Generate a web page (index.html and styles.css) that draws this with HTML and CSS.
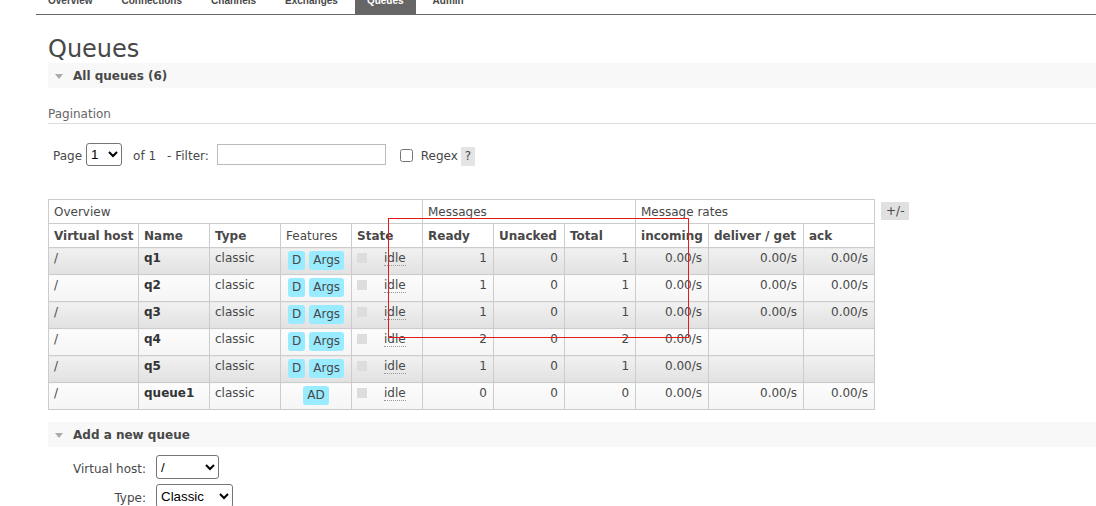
FILE: index.html
```
<!DOCTYPE html>
<html lang="en">
<head>
<meta charset="utf-8">
<title>RabbitMQ Management: Queues</title>
<link rel="stylesheet" href="styles.css">
</head>
<body>
<ul class="menu">
  <li class="tab">Overview</li>
  <li class="tab">Connections</li>
  <li class="tab">Channels</li>
  <li class="tab">Exchanges</li>
  <li class="tab tab-active">Queues</li>
  <li class="tab">Admin</li>
</ul>
<div class="main">
  <h1 class="title">Queues</h1>
  <div class="section-head"><span class="tri"></span><span>All queues (6)</span></div>
  <h3 class="pag-title">Pagination</h3>
  <div class="pager">
    <span class="txt">Page</span>
    <select class="sel sel-page"><option>1</option></select>
    <span class="txt of">of 1</span>
    <span class="txt filter">- Filter:</span>
    <input class="filter-input" type="text">
    <input class="chk" type="checkbox">
    <span class="txt regex">Regex</span>
    <span class="help">?</span>
  </div>
  <div class="table-wrap">
    <table class="list">
      <colgroup>
        <col class="w90"><col class="w71"><col class="w71"><col class="w71"><col class="w71"><col class="w71"><col class="w71"><col class="w71"><col class="w73"><col class="w95"><col class="w71">
      </colgroup>
      <thead>
        <tr class="group">
          <th colspan="5">Overview</th>
          <th colspan="3">Messages</th>
          <th colspan="3">Message rates</th>
        </tr>
        <tr class="cols">
          <th>Virtual host</th><th>Name</th><th>Type</th><th class="plain">Features</th><th>State</th><th>Ready</th><th>Unacked</th><th>Total</th><th>incoming</th><th>deliver / get</th><th>ack</th>
        </tr>
      </thead>
      <tbody>
        <tr class="alt1">
          <td>/</td><td class="name">q1</td><td>classic</td>
          <td class="feat"><div class="badges"><span class="badge">D</span><span class="badge">Args</span></div></td>
          <td><span class="sq"></span><span class="idle">idle</span></td>
          <td class="r">1</td><td class="r">0</td><td class="r">1</td><td class="r">0.00/s</td><td class="r">0.00/s</td><td class="r">0.00/s</td>
        </tr>
        <tr class="alt2">
          <td>/</td><td class="name">q2</td><td>classic</td>
          <td class="feat"><div class="badges"><span class="badge">D</span><span class="badge">Args</span></div></td>
          <td><span class="sq"></span><span class="idle">idle</span></td>
          <td class="r">1</td><td class="r">0</td><td class="r">1</td><td class="r">0.00/s</td><td class="r">0.00/s</td><td class="r">0.00/s</td>
        </tr>
        <tr class="alt1">
          <td>/</td><td class="name">q3</td><td>classic</td>
          <td class="feat"><div class="badges"><span class="badge">D</span><span class="badge">Args</span></div></td>
          <td><span class="sq"></span><span class="idle">idle</span></td>
          <td class="r">1</td><td class="r">0</td><td class="r">1</td><td class="r">0.00/s</td><td class="r">0.00/s</td><td class="r">0.00/s</td>
        </tr>
        <tr class="alt2">
          <td>/</td><td class="name">q4</td><td>classic</td>
          <td class="feat"><div class="badges"><span class="badge">D</span><span class="badge">Args</span></div></td>
          <td><span class="sq"></span><span class="idle">idle</span></td>
          <td class="r">2</td><td class="r">0</td><td class="r">2</td><td class="r">0.00/s</td><td class="r"></td><td class="r"></td>
        </tr>
        <tr class="alt1">
          <td>/</td><td class="name">q5</td><td>classic</td>
          <td class="feat"><div class="badges"><span class="badge">D</span><span class="badge">Args</span></div></td>
          <td><span class="sq"></span><span class="idle">idle</span></td>
          <td class="r">1</td><td class="r">0</td><td class="r">1</td><td class="r">0.00/s</td><td class="r"></td><td class="r"></td>
        </tr>
        <tr class="alt2">
          <td>/</td><td class="name">queue1</td><td>classic</td>
          <td class="feat"><div class="badges"><span class="badge">AD</span></div></td>
          <td><span class="sq"></span><span class="idle">idle</span></td>
          <td class="r">0</td><td class="r">0</td><td class="r">0</td><td class="r">0.00/s</td><td class="r">0.00/s</td><td class="r">0.00/s</td>
        </tr>
      </tbody>
    </table>
    <span class="toggle">+/-</span>
  </div>
  <div class="section-head"><span class="tri"></span><span>Add a new queue</span></div>
  <div class="form">
    <label class="lbl">Virtual host:</label>
    <select class="sel sel-vh"><option>/</option></select>
    <label class="lbl">Type:</label>
    <select class="sel sel-type"><option>Classic</option></select>
  </div>
</div>
<div class="annot"></div>
</body>
</html>
```
FILE: styles.css
```
html, body {
  overflow: hidden;
}
body {
  margin: 0;
  font-family: "DejaVu Sans", Verdana, sans-serif;
  font-size: 12px;
  line-height: 14px;
  color: #484848;
  background: #fff;
}
.menu {
  display: flex;
  list-style: none;
  margin: -20px 0 0 36px;
  padding: 0;
  border-bottom: 1px solid #666;
}
.tab {
  height: 27px;
  line-height: 28px;
  padding: 7px 12px 0;
  margin-right: 5px;
  font-family: "Liberation Sans", Arial, sans-serif;
  font-weight: bold;
  font-size: 10px;
  color: #484848;
  overflow: hidden;
}
.tab-active {
  background: #666;
  color: #fff;
}
.main {
  padding-left: 48px;
}
.title {
  margin: 20px 0 0;
  font-size: 24px;
  line-height: 28px;
  font-weight: normal;
  color: #484848;
}
.section-head {
  display: flex;
  align-items: center;
  height: 25px;
  background: #f8f8f8;
  font-weight: bold;
  color: #484848;
}
.tri {
  width: 0;
  height: 0;
  border-left: 4.5px solid transparent;
  border-right: 4.5px solid transparent;
  border-top: 5px solid #aaa;
  margin: 1px 10px 0 7px;
}
.pag-title {
  margin: 19px 0 0;
  padding-bottom: 2px;
  border-bottom: 1px solid #ddd;
  font-size: 12px;
  line-height: 14px;
  font-weight: normal;
  color: #666;
}
.pager {
  display: flex;
  align-items: center;
  height: 24px;
  margin-top: 18px;
  padding-left: 5px;
}
.txt {
  margin-top: 3px;
}
.sel {
  box-sizing: border-box;
  font-family: "Liberation Sans", Arial, sans-serif;
  font-size: 13.33px;
  color: #000;
  background: #fff;
  border: 1px solid #767676;
  border-radius: 3px;
  margin: 0;
}
.sel-page {
  width: 36px;
  height: 23px;
  margin-left: 4px;
}
.of {
  margin-left: 11px;
}
.filter {
  margin-left: 11px;
}
.filter-input {
  box-sizing: border-box;
  width: 169px;
  height: 21px;
  margin: 0 0 0 8px;
  border: 1px solid #bbb;
  padding: 0 2px;
}
.chk {
  width: 13px;
  height: 13px;
  margin: 2px 0 0 14px;
}
.regex {
  margin-left: 8px;
}
.help {
  margin: 5px 0 0 3px;
  padding: 0 4px;
  height: 19px;
  line-height: 19px;
  background: #e4e4e4;
}
.table-wrap {
  display: flex;
  align-items: flex-start;
  margin-top: 33px;
}
.list {
  table-layout: fixed;
  width: 827px;
  border-collapse: collapse;
}
.w90 { width: 90px; }
.w71 { width: 71px; }
.w73 { width: 73px; }
.w95 { width: 95px; }
.list th,
.list td {
  border: 1px solid #ccc;
  text-align: left;
  vertical-align: top;
  white-space: nowrap;
  overflow: hidden;
}
.list th {
  padding: 5px 5px 4px;
  background: #fff;
}
.group th {
  font-weight: normal;
}
.cols th {
  font-weight: bold;
}
.cols th.plain {
  font-weight: normal;
}
.list td {
  padding: 3px 6px 4px 5px;
}
.alt1 td {
  background: linear-gradient(to bottom, #f1f1f1 0%, #e1e1e1 100%);
}
.alt2 td {
  background: linear-gradient(to bottom, #fcfcfc 0%, #f5f5f5 100%);
}
.list td.r {
  text-align: right;
}
.list td.name {
  font-weight: bold;
  color: #333;
}
.list td.feat {
  padding-left: 5px;
  padding-right: 5px;
}
.badges {
  display: flex;
  justify-content: center;
  gap: 4px;
}
.badge {
  padding: 2px 4px;
  line-height: 15px;
  background: #99ebff;
  border-radius: 3px;
  color: #484848;
}
.sq {
  display: inline-block;
  vertical-align: top;
  width: 10px;
  height: 10px;
  margin: 2px 17px 0 0;
  background: #ddd;
}
.idle {
  border-bottom: 1px dotted #999;
}
.toggle {
  margin: 3px 0 0 6px;
  padding: 0 5px;
  height: 18px;
  line-height: 18px;
  background: #e0e0e0;
}
.table-wrap + .section-head {
  margin-top: 12px;
}
.form {
  display: grid;
  grid-template-columns: 98px auto;
  column-gap: 10px;
  row-gap: 5px;
  margin-top: 8px;
  justify-items: start;
}
.lbl {
  justify-self: end;
  padding-top: 7px;
}
.sel-vh {
  width: 63px;
  height: 24px;
}
.sel-type {
  width: 77px;
  height: 24px;
}
.annot {
  position: absolute;
  left: 388px;
  top: 218px;
  width: 299px;
  height: 118px;
  border: 1px solid #e31b1b;
  pointer-events: none;
}
```
